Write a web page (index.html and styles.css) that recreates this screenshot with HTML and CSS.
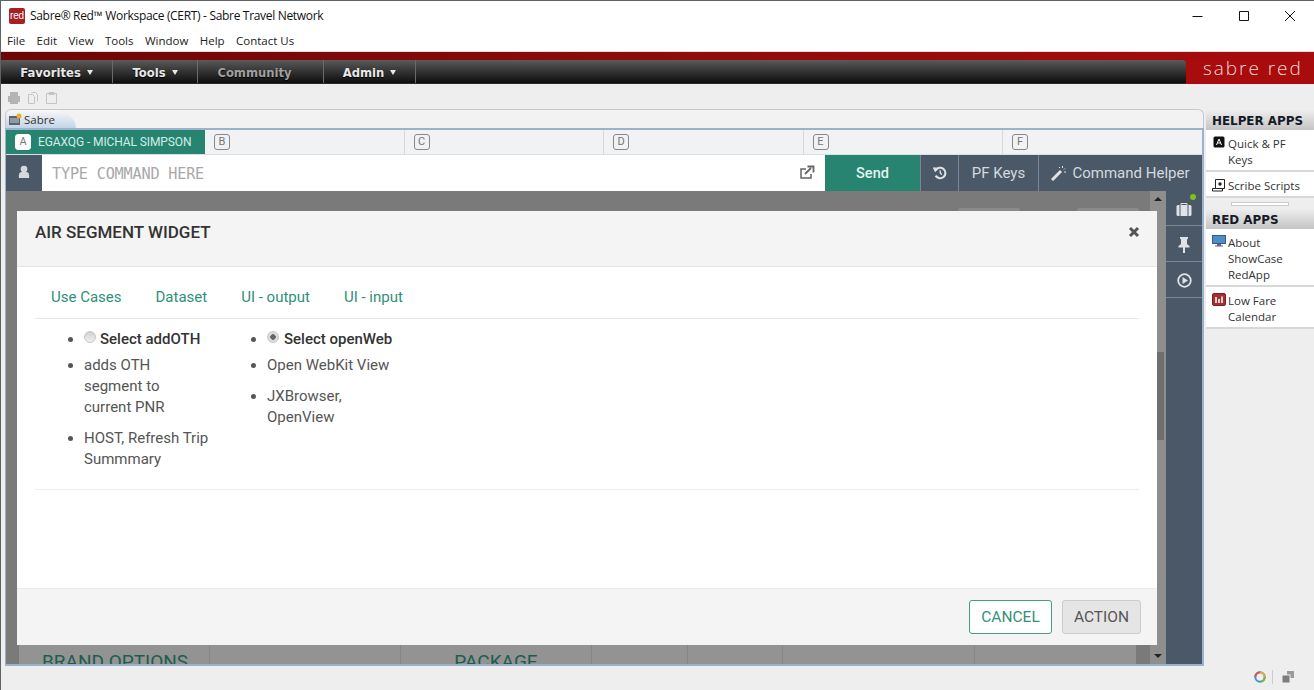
FILE: index.html
```html
<!DOCTYPE html>
<html lang="en">
<head>
<meta charset="utf-8">
<title>Sabre Red Workspace</title>
<link rel="stylesheet" href="styles.css">
</head>
<body>
<div class="window">
  <header class="titlebar">
    <div class="app-logo">red</div>
    <div class="app-title">Sabre® Red™ Workspace (CERT) - Sabre Travel Network</div>
    <div class="win-controls">
      <svg class="win-btn" width="46" height="30" viewBox="0 0 46 30"><path d="M17.500 15.500h10" stroke="#111" fill="none"/></svg>
      <svg class="win-btn" width="46" height="30" viewBox="0 0 46 30"><path d="M18.500 10.500h9v9h-9z" stroke="#111" fill="none"/></svg>
      <svg class="win-btn" width="46" height="30" viewBox="0 0 46 30"><path d="M18 10l10 10M28 10L18 20" stroke="#111" fill="none"/></svg>
    </div>
  </header>
  <nav class="menubar">
    <span>File</span><span>Edit</span><span>View</span><span>Tools</span><span>Window</span><span>Help</span><span>Contact Us</span>
  </nav>
  <div class="redband"></div>
  <div class="navrow">
    <div class="navbar">
      <div class="navitem w-fav">Favorites<i class="caret"></i></div>
      <div class="navitem w-tools">Tools<i class="caret"></i></div>
      <div class="navitem w-comm muted">Community</div>
      <div class="navitem w-admin">Admin<i class="caret"></i></div>
    </div>
    <div class="brand">sabre red</div>
  </div>
  <div class="toolbar">
    <svg width="14" height="14" viewBox="0 0 14 14"><path d="M3 1h8v4h2v6h-2v2H3v-2H1V5h2z" fill="#b4b4b4"/></svg>
    <svg width="14" height="14" viewBox="0 0 14 14"><path d="M2.500 3.500h4l2 2v7h-6zM5.500 1.500h4l2 2v7" fill="none" stroke="#c4c4c4"/></svg>
    <svg width="14" height="14" viewBox="0 0 14 14"><path d="M1.500 2.500h10v10h-10zM4 1.500h5v2H4z" fill="none" stroke="#c4c4c4"/></svg>
  </div>
  <div class="workspace">
    <main class="editor">
      <div class="folder">
        <div class="folder-tab">
          <svg width="14" height="13" viewBox="0 0 14 13"><rect x="1" y="3" width="11" height="9" fill="#5a6470"/><rect x="2" y="5" width="9" height="5" fill="#8d99a6"/><circle cx="11" cy="3" r="2.500" fill="#eeb02e"/></svg>
          <span>Sabre</span>
        </div>
      </div>
      <div class="pane">
        <div class="areas">
          <div class="area active"><b class="key">A</b><span>EGAXQG - MICHAL SIMPSON</span></div>
          <div class="area"><b class="key">B</b></div>
          <div class="area"><b class="key">C</b></div>
          <div class="area"><b class="key">D</b></div>
          <div class="area"><b class="key">E</b></div>
          <div class="area last"><b class="key">F</b></div>
        </div>
        <div class="cmdrow">
          <div class="userbox">
            <svg width="12" height="14" viewBox="0 0 14 16"><circle cx="7" cy="4.500" r="3.900" fill="#d5d9de"/><path d="M1 15v-3c0-3 2-4 3-4h6c1 0 3 1 3 4v3z" fill="#d5d9de"/></svg>
          </div>
          <div class="cmdinput">
            <span class="placeholder">TYPE COMMAND HERE</span>
            <svg width="16" height="15" viewBox="0 0 16 15"><path d="M12 9v4H2V4h5" fill="none" stroke="#666" stroke-width="1.500"/><path d="M6 9l6-6M8.500 1.500H14.500V7.500" fill="none" stroke="#666" stroke-width="1.800"/></svg>
          </div>
          <div class="send">Send</div>
          <div class="cmdbtn hist">
            <svg width="14" height="14" viewBox="0 0 16 16"><path d="M3 5a6 6 0 1 1 0 6" fill="none" stroke="#dfe3e7" stroke-width="2.400"/><path d="M0.500 2l5 .5-3 4zM8 4.500v4l2.500 1.500" fill="#dfe3e7" stroke="#dfe3e7"/></svg>
          </div>
          <div class="cmdbtn pf">PF Keys</div>
          <div class="cmdbtn helper">
            <svg width="16" height="16" viewBox="0 0 16 16"><path d="M1 15L10 6" stroke="#dfe3e7" stroke-width="3"/><path d="M11.500 1v2M14 3.500l-1 1M15 7h-2M8 2l1 1" stroke="#dfe3e7"/></svg>
            <span>Command Helper</span>
          </div>
        </div>
        <div class="content">
          <div class="canvas">
            <div class="bg-btn bg-b1"></div>
            <div class="bg-btn bg-b2"></div>
            <div class="bg-table">
              <div class="bg-cell c1">BRAND OPTIONS</div>
              <div class="bg-cell c2"></div>
              <div class="bg-cell c3">PACKAGE</div>
              <div class="bg-cell c4"></div>
              <div class="bg-cell c5"></div>
              <div class="bg-cell c6"></div>
            </div>
            <div class="scroller">
              <i class="arrow up"></i>
              <div class="thumb"></div>
              <i class="arrow down"></i>
            </div>
            <section class="modal">
              <div class="modal-head">
                <h2>AIR SEGMENT WIDGET</h2>
                <svg width="12" height="12" viewBox="0 0 12 12"><path d="M2 2l8 8M10 2l-8 8" stroke="#555" stroke-width="3"/></svg>
              </div>
              <div class="modal-body">
                <div class="tabs">
                  <span>Use Cases</span><span>Dataset</span><span>UI - output</span><span>UI - input</span>
                </div>
                <div class="cols">
                  <ul class="col col-a">
                    <li class="opt"><i class="radio"></i><b>Select addOTH</b></li>
                    <li>adds OTH segment to current PNR</li>
                    <li>HOST, Refresh Trip Summmary</li>
                  </ul>
                  <ul class="col col-b">
                    <li class="opt"><i class="radio on"></i><b>Select openWeb</b></li>
                    <li>Open WebKit View</li>
                    <li>JXBrowser, OpenView</li>
                  </ul>
                </div>
              </div>
              <div class="modal-foot">
                <div class="btn cancel">CANCEL</div>
                <div class="btn action">ACTION</div>
              </div>
            </section>
          </div>
          <aside class="rail">
            <div class="rail-item first">
              <svg width="16" height="15" viewBox="0 0 16 15"><path d="M5 3V1.500h6V3" fill="none" stroke="#dfe3e7"/><rect x="0.500" y="3" width="15" height="11" rx="1.500" fill="#dfe3e7"/><path d="M4 3v11M12 3v11" stroke="#4b5869"/></svg>
              <i class="dot"></i>
            </div>
            <div class="rail-item">
              <svg width="12" height="16" viewBox="0 0 12 16"><path d="M2 0h8v1.500L9 2.500V7l2.500 2v1.500H7V16H5v-5.500H.500V9L3 7V2.500L2 1.500z" fill="#dfe3e7"/></svg>
            </div>
            <div class="rail-item">
              <svg width="15" height="15" viewBox="0 0 15 15"><circle cx="7.500" cy="7.500" r="6.300" fill="none" stroke="#dfe3e7" stroke-width="1.800"/><path d="M5.500 4l5.500 3.500L5.500 11z" fill="#dfe3e7"/></svg>
            </div>
          </aside>
        </div>
      </div>
    </main>
    <aside class="apps">
      <h3>HELPER APPS</h3>
      <div class="app">
        <svg width="14" height="12" viewBox="-1 0 14 12"><rect width="11" height="11" x=".5" y=".5" rx="1.500" fill="#111"/><path d="M3.500 9L6 3l2.500 6M4.500 7h3" stroke="#fff" fill="none"/></svg>
        <span>Quick &amp; PF Keys</span>
      </div>
      <div class="app">
        <svg width="14" height="14" viewBox="0 0 14 14"><path d="M3.500 1.500h9v9h-9zM.5 10.500h10v2.500H.5z" fill="#fff" stroke="#222"/><circle cx="8" cy="6" r="1.700" fill="#222"/></svg>
        <span>Scribe Scripts</span>
      </div>
      <div class="sash"><i></i></div>
      <h3>RED APPS</h3>
      <div class="app">
        <svg width="14" height="12" viewBox="0 0 14 12"><rect x=".5" y=".5" width="13" height="8" fill="#4a8fca" stroke="#3c5a78"/><path d="M5 9h4v1.500H5zM3 10.500h8v1H3z" fill="#667"/></svg>
        <span>About ShowCase RedApp</span>
      </div>
      <div class="app">
        <svg width="14" height="13" viewBox="0 0 14 13"><rect x=".5" y=".5" width="13" height="12" rx="1.500" fill="#a23034" stroke="#7d1f22"/><path d="M4 4v6M7 6v4M10 3.500V10" stroke="#fff" stroke-width="1.500"/></svg>
        <span>Low Fare Calendar</span>
      </div>
    </aside>
  </div>
  <footer class="statusbar">
    <svg width="12" height="12" viewBox="0 0 12 12"><circle cx="6" cy="6" r="4.700" fill="none" stroke="#3a9ad9" stroke-width="2"/><path d="M6 1.300A4.700 4.700 0 0 1 10.700 6" fill="none" stroke="#e8a33a" stroke-width="2"/><path d="M10.700 6A4.700 4.700 0 0 1 7 10.600" fill="none" stroke="#7fb24a" stroke-width="2"/><path d="M1.300 6A4.700 4.700 0 0 1 6 1.300" fill="none" stroke="#d9534f" stroke-width="2"/></svg>
    <i class="status-sep"></i>
    <svg width="14" height="14" viewBox="0 0 14 14"><rect x="6" y="1" width="7" height="7" fill="#9a9a9a"/><rect x="1" y="5" width="8" height="8" fill="#7d7d7d" stroke="#eee"/></svg>
  </footer>
</div>
</body>
</html>
```
FILE: styles.css
```css
* { box-sizing: border-box; }
html, body { margin: 0; padding: 0; }
body { width: 1314px; height: 690px; overflow: hidden; background: #eee; font-family: "Liberation Sans", Arial, sans-serif; }
.window { width: 1314px; height: 690px; display: flex; flex-direction: column; border-top: 1px solid #5c6468; border-left: 1px solid #5c6468; background: #eee; }

.titlebar { height: 29px; flex: none; background: #fff; display: flex; align-items: center; padding-left: 8px; color: #111; }
.app-logo { width: 16px; height: 16px; background: #a81f23; color: #fff; font-family: "Liberation Sans", sans-serif; font-size: 10px; line-height: 15px; text-align: center; border-radius: 2px; letter-spacing: -.2px; }
.app-title { margin-left: 5px; font-family: "Open Sans", sans-serif; font-size: 12px; letter-spacing: -.32px; white-space: nowrap; }
.win-controls { margin-left: auto; display: flex; height: 30px; margin-right: 1px; }
.win-controls svg { display: block; }

.menubar { height: 21px; flex: none; background: #fff; display: flex; gap: 11.400px; padding: 0 0 0 6px; align-items: center; font-family: "Open Sans", sans-serif; font-size: 11.500px; color: #222; }

.redband { height: 9px; flex: none; background: linear-gradient(90deg, #6d0606 0%, #8f0b0b 50%, #a80c0c 100%); border-top: 1px solid #ddd; }
.navrow { height: 24px; flex: none; display: flex; background: #a80c0c; }
.navbar { width: 1185px; display: flex; border-radius: 0 4px 0 0; background: linear-gradient(#5a5a5a, #333 50%, #0e0e0e); border-bottom: 1px solid #2a2a2a; }
.navitem { display: flex; align-items: center; justify-content: center; padding-top: 2px; color: #e8e8e8; font-family: "DejaVu Sans", sans-serif; font-weight: 700; font-size: 11.600px; text-shadow: 0 1px 1px #000; border-right: 1px solid #6a6a6a; gap: 6px; }
.navitem.muted { color: #a0a0a0; padding-right: 12px; }
.w-fav { width: 112px; }
.w-tools { width: 85px; }
.w-comm { width: 126px; }
.w-admin { width: 92px; }
.caret { width: 0; height: 0; border-left: 3px solid transparent; border-right: 3px solid transparent; border-top: 5px solid #e8e8e8; }
.brand { flex: 1; color: #eed9d9; font-family: "Open Sans", sans-serif; font-size: 19px; letter-spacing: 1.950px; padding-left: 17px; line-height: 17px; white-space: nowrap; font-weight: 300; }

.toolbar { height: 25px; flex: none; display: flex; align-items: center; gap: 5px; padding: 2px 0 0 6px; }
.toolbar svg { display: block; }

.workspace { flex: 1; display: flex; min-height: 0; padding-left: 4px; }
.editor { width: 1199px; height: 557px; display: flex; flex-direction: column; }
.folder { height: 19px; flex: none; background: #f2f2f2; border: 1px solid #c4c8cc; border-bottom: 0; border-radius: 6px 6px 0 0; }
.folder-tab { width: 70px; height: 18px; background: linear-gradient(#f8f8f8, #c4d4e6); display: flex; align-items: center; gap: 2px; padding-left: 2px; font-family: "Open Sans", sans-serif; font-size: 11.500px; color: #333; border-radius: 6px 24px 0 0 / 6px 18px 0 0; }
.folder-tab svg { flex: none; }
.pane { flex: 1; display: flex; flex-direction: column; border: 2px solid #9ab2cc; border-left-width: 1px; background: #7a7a7a; min-height: 0; }
.areas { height: 25px; flex: none; display: flex; background: #f1f2f3; border-bottom: 1px solid #dcdee0; }
.area { width: 199.500px; flex: none; display: flex; align-items: center; gap: 7px; padding-left: 9px; border-right: 1px solid #d6d8da; }
.area.last { flex: 1; width: auto; border-right: 0; }
.area.active { width: 199px; background: #268471; color: #d4ece6; border-right: 0; font-size: 12px; letter-spacing: -.1px; font-family: Roboto, sans-serif; }
.key { display: block; width: 16px; height: 16px; border: 1px solid #888; border-radius: 3px; font-family: Roboto, sans-serif; font-size: 11px; font-weight: 400; line-height: 14px; text-align: center; color: #777; }
.active .key { background: #fff; border-color: #fff; }
.cmdrow { height: 36px; flex: none; display: flex; background: #4a5868; }
.userbox { width: 36px; display: flex; align-items: center; justify-content: center; padding-bottom: 2px; }
.cmdinput { width: 783px; background: #fff; display: flex; align-items: center; justify-content: space-between; padding: 0 10px 2px 10px; }
.placeholder { margin-top: 4px; font-family: "DejaVu Sans Mono", monospace; font-size: 15.200px; color: #a8a8a8; white-space: nowrap; letter-spacing: -.2px; }
.send { width: 95px; background: #268471; color: #e4f2ef; display: flex; align-items: center; justify-content: center; font-family: Roboto, sans-serif; font-weight: 500; font-size: 14.500px; }
.cmdbtn { display: flex; align-items: center; justify-content: center; color: #d4d9de; font-family: Roboto, sans-serif; font-size: 15px; border-left: 1px solid #7a8694; gap: 5px; }
.hist { width: 38px; }
.pf { width: 80px; }
.helper { flex: 1; white-space: nowrap; }

.content { flex: 1; display: flex; min-height: 0; }
.canvas { flex: 1; position: relative; background: #7a7a7a; overflow: hidden; }
.bg-btn { position: absolute; top: 17px; width: 62px; height: 10px; background: #8a8a8a; border-radius: 2px; }
.bg-b1 { left: 952px; }
.bg-b2 { left: 1071px; }
.bg-table { position: absolute; left: 13px; bottom: 0; width: 1117px; height: 20px; background: #939393; display: flex; }
.bg-cell { width: 191px; flex: none; border-right: 1px solid #868686; color: #1d5d4e; font-family: Roboto, sans-serif; font-size: 19px; line-height: 22px; padding-top: 7px; white-space: nowrap; overflow: hidden; }
.c1 { padding-left: 23px; }
.c3 { text-align: center; }
.c4 { width: 96px; }
.c5 { width: 95px; }
.c6 { width: 192px; }
.scroller { position: absolute; right: 0; top: 0; bottom: 0; width: 16px; background: #8e8e8e; display: flex; flex-direction: column; align-items: center; }
.thumb { position: absolute; left: 6px; width: 8px; top: 161px; height: 88px; background: #6e6e6e; }
.arrow { position: absolute; width: 0; height: 0; border-left: 4px solid transparent; border-right: 4px solid transparent; }
.arrow.up { top: 6px; border-bottom: 4px solid #222; }
.arrow.down { bottom: 6px; border-top: 4px solid #222; }
.modal { position: absolute; left: 11px; top: 20px; width: 1140px; height: 434px; background: #fff; border-radius: 2px; display: flex; flex-direction: column; }
.modal-head { height: 56px; flex: none; background: #f4f4f4; border-bottom: 1px solid #e5e5e5; display: flex; align-items: flex-start; justify-content: space-between; padding: 12px 17px 0 18px; }
.modal-head h2 { margin: 0; font-family: Roboto, sans-serif; font-weight: 500; font-size: 17px; line-height: 19px; color: #333; }
.modal-head svg { margin-top: 3px; }
.modal-body { flex: 1; margin: 0 18px; min-height: 0; }
.tabs { height: 52px; display: flex; gap: 34px; padding: 20px 0 0 16px; border-bottom: 1px solid #e8e8e8; color: #2f8f7a; font-family: Roboto, sans-serif; font-size: 15px; line-height: 20px; }
.cols { display: flex; height: 171px; border-bottom: 1px solid #eee; font-family: Roboto, sans-serif; font-size: 15px; color: #555; }
.col { margin: 0; padding: 10px 0 0 49px; list-style: disc; }
.col-a { width: 183px; padding-right: 8px; flex: none; }
.col-b { width: 178px; padding-left: 49px; flex: none; }
.col li { line-height: 21px; margin-bottom: 10px; }
.col li.opt { margin-bottom: 5px; }
.col b { font-weight: 500; color: #333; white-space: nowrap; }
.radio { display: inline-block; width: 12px; height: 12px; border-radius: 50%; background: linear-gradient(#d0d0d0, #f0f0f0); border: 1px solid #c8c8c8; margin-right: 4px; vertical-align: 1px; }
.radio.on { background: radial-gradient(circle, #666 0 2.500px, #dcdcdc 3px); margin-right: 5px; }
.modal-foot { height: 57px; flex: none; background: #f4f4f4; border-top: 1px solid #ebebeb; display: flex; justify-content: flex-end; align-items: center; gap: 10px; padding: 0 16px 0 0; }
.btn { height: 34px; display: flex; align-items: center; justify-content: center; border-radius: 3px; font-family: Roboto, sans-serif; font-size: 15.500px; }
.cancel { width: 83px; border: 1px solid #4a9a88; background: #fff; color: #36907c; }
.action { width: 79px; border: 1px solid #ccc; background: #e5e5e5; color: #555; }
.rail { width: 36px; flex: none; background: #4a5868; display: flex; flex-direction: column; }
.rail-item { height: 36px; padding-top: 2px; border-bottom: 1px solid #7a8694; display: flex; align-items: center; justify-content: center; position: relative; }
.first { height: 35px; }
.dot { position: absolute; right: 6px; top: 3px; width: 6px; height: 6px; border-radius: 50%; background: #7cc11e; }

.apps { width: 108px; margin: 1px 0 0 2px; display: flex; flex-direction: column; background: #eee; }
.apps h3 { margin: 0; height: 20px; flex: none; background: linear-gradient(#eee, #c4c4c4); font-family: "DejaVu Sans", sans-serif; font-size: 11.900px; font-weight: 700; line-height: 23px; padding-left: 6px; color: #151a28; white-space: nowrap; }
.app { display: flex; gap: 2px; background: #fff; padding: 6px 8px 2px 6px; border-bottom: 2px solid #d8d8d8; font-family: "Open Sans", sans-serif; font-size: 11.500px; line-height: 16px; color: #333; }
.app svg { flex: none; }
.sash { height: 11px; flex: none; padding: 4px 25px 0; }
.sash i { display: block; height: 4px; background: #fff; border: 1px solid #ccc; }

.statusbar { height: 24px; flex: none; display: flex; align-items: center; justify-content: flex-end; padding: 0 19px 2px 0; }
.status-sep { width: 1px; height: 14px; background: #ccc; margin: 0 8px 0 6px; }
```
